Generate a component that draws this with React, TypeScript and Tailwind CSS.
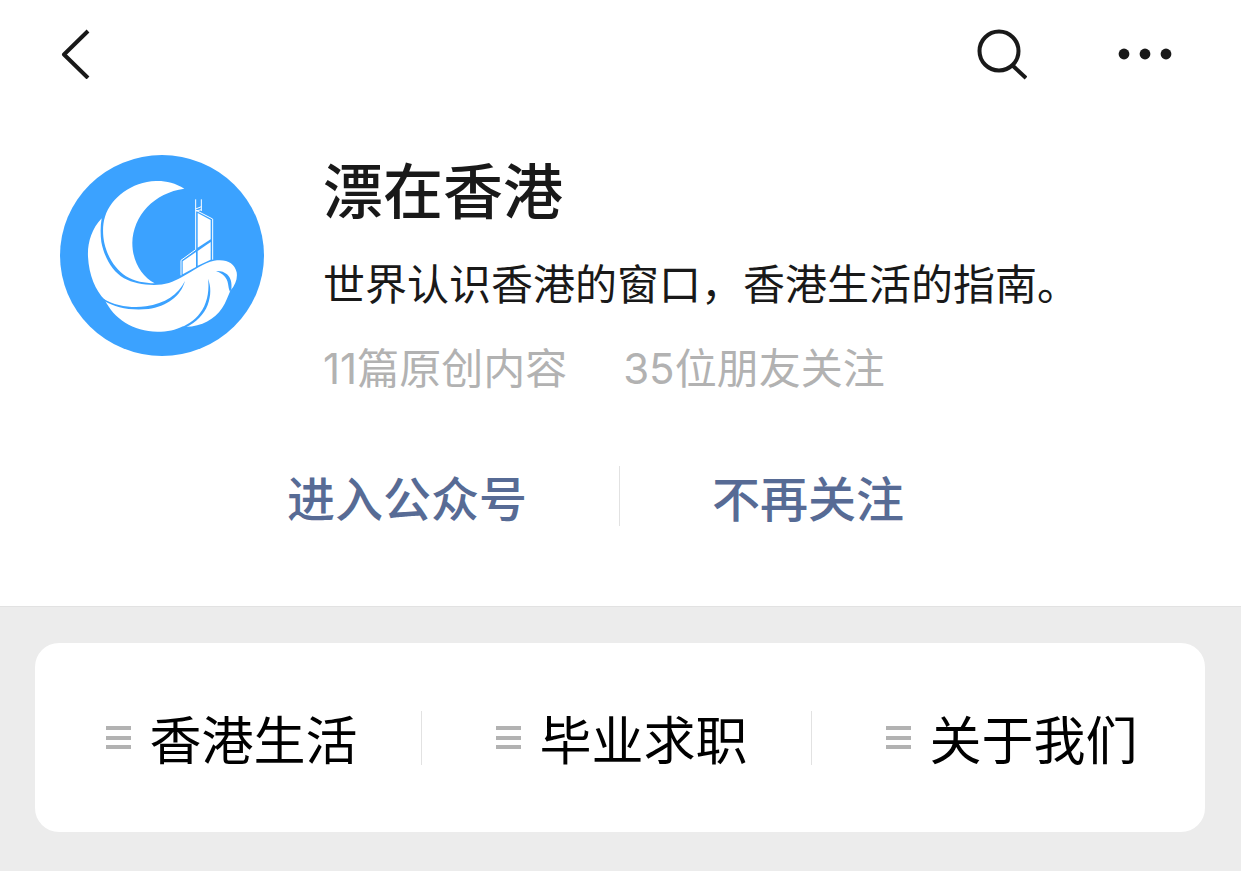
const menus = [
  { id: 'life', label: '香港生活' },
  { id: 'career', label: '毕业求职' },
  { id: 'about', label: '关于我们' },
];

function Logo() {
  return (
    <svg viewBox="30 30 612 603" className="w-[204px] h-[201px] shrink-0" role="img" aria-label="漂在香港">
      <ellipse cx="336" cy="331.5" rx="306" ry="301.5" fill="#3ba2ff" />

      {/* moon and waves */}
      <g fill="#fff">
        <path d="M403 131C375 113 345 107 318 108C244 111 184 157 165 215C157 240 158 270 163 294C173 338 197 373 228 394C254 409 284 415 314 415C274 393 247 348 247 294C249 211 313 143 403 131Z" />
        <path d="M155 220C124 253 112 295 114 335C117 390 136 436 165 465C190 520 250 560 322 560C352 560 378 554 396 545C450 549 492 525 516 490C528 472 533 455 541 437C557 420 563 400 560 382C553 353 529 341 492 347C460 354 436 374 396 396C370 411 345 420 312 420C278 419 247 414 222 400C187 379 163 338 154 291C151 268 151 243 155 220Z" />
      </g>
      <g fill="#3ba2ff">
        <path d="M160 461C197 484 245 489 288 484C345 476 385 448 405 408C392 455 350 484 295 492C240 497 195 488 164 468Z" />
        <path d="M474 401C478 430 474 466 457 494C441 520 419 536 393 547L408 547C439 532 462 508 473 480C484 450 483 424 474 401Z" />
        <path d="M498 378C519 385 531 399 534 416C536 425 536 432 540 440L544 434C546 414 543 399 531 388C522 380 511 377 498 378Z" />
      </g>

      {/* tower */}
      <path d="M437 163V314M454 163V198M437 192L454 185M438 196L488 222V344M438 198L454 194M437 314L393 346V391" fill="none" stroke="#fff" strokeWidth="3" />
      <path d="M443 204L482 225V283L443 308Z" fill="#fff" />
      <path d="M443 318L482 291V344L443 362Z" fill="#fff" />
      <path d="M398 349L438 321V366L398 388Z" fill="#fff" />
    </svg>
  );
}

export default function App() {
  return (
    <div className="min-h-screen flex flex-col bg-white text-[#191919] font-['Noto_Sans_CJK_SC',sans-serif]">
      {/* NAV BAR */}
      <header className="h-[108px] flex items-center justify-between pl-[60px] pr-[68px]">
        <button type="button" aria-label="返回" className="cursor-pointer">
          <svg width="32" height="50" viewBox="0 0 32 50" fill="none" stroke="#191919" strokeWidth="4">
            <path d="M28 2L4 25.5L28 49" strokeLinejoin="round" />
          </svg>
        </button>
        <div className="flex items-center gap-[90px]">
          <button type="button" aria-label="搜索" className="cursor-pointer">
            <svg width="52" height="52" viewBox="0 0 52 52" fill="none" stroke="#191919" strokeWidth="4">
              <circle cx="24" cy="23" r="19.5" />
              <path d="M37 37L51 50" />
            </svg>
          </button>
          <button type="button" aria-label="更多" className="cursor-pointer">
            <svg width="56" height="12" viewBox="0 0 56 12" fill="#191919">
              <circle cx="7" cy="6" r="5.4" />
              <circle cx="28" cy="6" r="5.4" />
              <circle cx="49" cy="6" r="5.4" />
            </svg>
          </button>
        </div>
      </header>

      {/* PROFILE */}
      <section className="flex gap-[59px] pt-[47px] px-[60px]">
        <Logo />
        <div className="pt-[3px]">
          <h1 className="text-[60px] leading-[60px] font-medium">漂在香港</h1>
          <p className="mt-[34px] text-[42px] leading-[60px]">世界认识香港的窗口，香港生活的指南。</p>
          <p className="mt-[27px] flex gap-14 text-[42px] leading-[60px] text-[#b2b2b2] font-['Inter','Noto_Sans_CJK_SC',sans-serif]">
            <span>11篇原创内容</span>
            <span>35位朋友关注</span>
          </p>
        </div>
      </section>

      {/* ACTIONS */}
      <div className="flex items-center justify-center gap-[92px] mt-[67px] mb-20 pr-[50px] text-[48px] leading-[60px] font-medium text-[#576b95]">
        <a href="#account">进入公众号</a>
        <span className="w-px h-[60px] bg-[#e2e2e2]" />
        <button type="button" className="cursor-pointer">不再关注</button>
      </div>

      {/* MENU */}
      <div className="flex-1 bg-[#ececec] border-t border-[#e2e2e2] pl-[35px] pr-9 pt-9 pb-[39px]">
        <nav className="grid grid-cols-3 h-[189px] rounded-[24px] bg-white text-black">
          {menus.map((menu, i) => (
            <div key={menu.id} className="flex items-center pl-2 pr-[3px]">
              <button type="button" className="flex-1 flex items-center justify-center gap-[18px] cursor-pointer">
                <svg width="25" height="24" viewBox="0 0 25 24" fill="#b2b2b2">
                  <path d="M0 0h25v4H0zM0 10h25v4H0zM0 19h25v4H0z" />
                </svg>
                <span className="text-[52px] leading-[60px]">{menu.label}</span>
              </button>
              <span className={i < menus.length - 1 ? 'w-px h-[54px] bg-[#e2e2e2]' : 'w-px'} />
            </div>
          ))}
        </nav>
      </div>
    </div>
  );
}
